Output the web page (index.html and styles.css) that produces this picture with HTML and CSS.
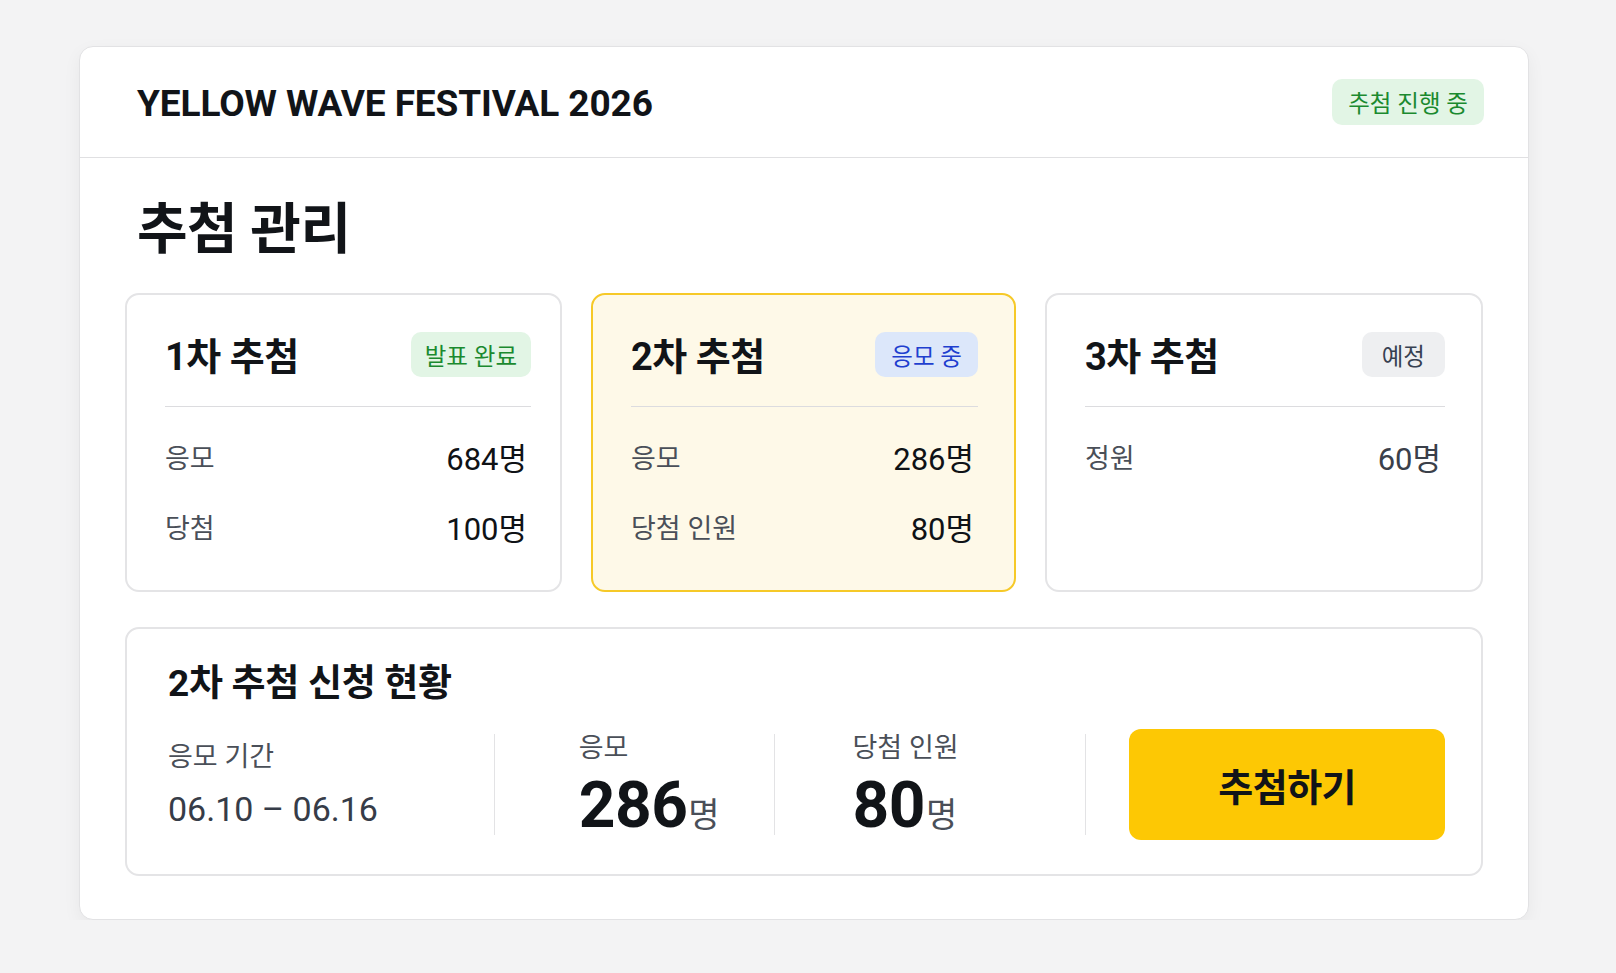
FILE: index.html
```html
<!DOCTYPE html>
<html lang="ko">
<head>
<meta charset="utf-8">
<title>추첨 관리</title>
<link rel="stylesheet" href="styles.css">
</head>
<body>
<main class="card">
  <header class="top">
    <div class="brand">YELLOW WAVE FESTIVAL 2026</div>
    <span class="badge badge-green badge-lg">추첨 진행 중</span>
  </header>
  <section class="content">
    <h1 class="page-title">추첨 관리</h1>
    <div class="rounds">
      <article class="round round-first">
        <div class="round-head">
          <h2 class="round-title">1차 추첨</h2>
          <span class="badge badge-green">발표 완료</span>
        </div>
        <div class="round-rows">
          <div class="row"><span class="label">응모</span><span class="value">684명</span></div>
          <div class="row"><span class="label">당첨</span><span class="value">100명</span></div>
        </div>
      </article>
      <article class="round round-active">
        <div class="round-head">
          <h2 class="round-title">2차 추첨</h2>
          <span class="badge badge-blue">응모 중</span>
        </div>
        <div class="round-rows">
          <div class="row"><span class="label">응모</span><span class="value">286명</span></div>
          <div class="row"><span class="label">당첨 인원</span><span class="value">80명</span></div>
        </div>
      </article>
      <article class="round">
        <div class="round-head">
          <h2 class="round-title">3차 추첨</h2>
          <span class="badge badge-gray">예정</span>
        </div>
        <div class="round-rows">
          <div class="row"><span class="label">정원</span><span class="value value-muted">60명</span></div>
        </div>
      </article>
    </div>
    <section class="status">
      <h2 class="status-title">2차 추첨 신청 현황</h2>
      <div class="status-row">
        <div class="stat stat-period">
          <span class="stat-label">응모 기간</span>
          <span class="stat-date">06.10 – 06.16</span>
        </div>
        <div class="stat stat-count">
          <span class="stat-label">응모</span>
          <span class="stat-num"><b>286</b><small>명</small></span>
        </div>
        <div class="stat stat-win">
          <span class="stat-label">당첨 인원</span>
          <span class="stat-num"><b>80</b><small>명</small></span>
        </div>
        <button class="draw-btn" type="button">추첨하기</button>
      </div>
    </section>
  </section>
</main>
</body>
</html>
```
FILE: styles.css
```css
* { box-sizing: border-box; }
html, body { margin: 0; padding: 0; }
body {
  background: #f3f3f4;
  font-family: "Roboto", "Noto Sans CJK KR", sans-serif;
  color: #111418;
  padding-top: 46px;
}
.card {
  width: 1450px;
  margin: 0 0 0 79px;
  background: #ffffff;
  border: 1px solid #e2e2e4;
  border-radius: 14px;
  box-shadow: 0 6px 18px rgba(0, 0, 0, 0.05);
}
.top {
  height: 111px;
  display: flex;
  align-items: center;
  justify-content: space-between;
  padding: 2px 44px 0 57px;
  border-bottom: 1.5px solid #e0e0e2;
}
.brand {
  font-size: 37px;
  font-weight: 700;
  letter-spacing: -0.1px;
  color: #111418;
}
.badge {
  display: inline-flex;
  align-items: center;
  justify-content: center;
  height: 45px;
  padding: 0 14px;
  border-radius: 10px;
  font-size: 23.5px;
  font-weight: 400;
  white-space: nowrap;
}
.badge-lg { height: 46px; padding: 0 16px; margin-top: -2px; }
.badge-green { background: #e2f5e5; color: #1b8a2f; }
.badge-blue { background: #dce7fa; color: #1f3fcf; padding: 0 16px; }
.badge-gray { background: #eeeff1; color: #374151; padding: 0 20px; }

.content { padding: 0 45px 43px; }
.page-title {
  margin: 41px 0 0 12px;
  font-size: 55px;
  line-height: 60px;
  font-weight: 700;
  color: #111418;
  letter-spacing: -0.5px;
}
.rounds {
  margin-top: 34px;
  display: grid;
  grid-template-columns: 437px 425px 438px;
  gap: 29px;
}
.round {
  height: 299px;
  border: 2px solid #e4e4e6;
  border-radius: 14px;
  padding: 37px 36px 0 38px;
  background: #ffffff;
}
.round-first { padding-right: 29px; }
.round-active {
  background: #fef9e8;
  border-color: #f6c928;
}
.round-head {
  display: flex;
  align-items: center;
  justify-content: space-between;
  height: 45px;
}
.round-title {
  margin: -3px 0 0;
  font-size: 38px;
  font-weight: 700;
  letter-spacing: -0.5px;
  color: #111418;
}
.round-rows {
  margin-top: 29px;
  border-top: 1.5px solid #dcdcdf;
  padding-top: 14px;
}
.row {
  height: 70px;
  display: flex;
  align-items: center;
  justify-content: space-between;
  padding-right: 4px;
}
.label { font-size: 27px; color: #4a4f58; }
.value { font-size: 31px; font-weight: 400; color: #0f1216; }
.value-muted { color: #3a404a; }

.status {
  margin-top: 35px;
  border: 2px solid #e4e4e6;
  border-radius: 14px;
  padding: 35px 36px 34px 41px;
}
.status-title {
  margin: 0;
  font-size: 37px;
  line-height: 40px;
  font-weight: 700;
  color: #111418;
  letter-spacing: -0.3px;
}
.status-row {
  margin-top: 25px;
  height: 111px;
  display: flex;
  align-items: center;
}
.stat {
  height: 101px;
  display: flex;
  flex-direction: column;
}
.stat-period {
  width: 327px;
  justify-content: center;
  gap: 16px;
  border-right: 1.5px solid #e3e3e5;
}
.stat-count { width: 280px; padding-left: 84px; border-right: 1.5px solid #e3e3e5; }
.stat-win { width: 312px; padding-left: 78px; border-right: 1.5px solid #e3e3e5; }
.stat-label { font-size: 27px; line-height: 32px; color: #4a4f58; }
.stat-count .stat-label,
.stat-win .stat-label { line-height: 28px; }
.stat-date { font-size: 34px; line-height: 40px; color: #363c48; }
.stat-num { display: flex; align-items: baseline; line-height: 64px; margin-top: 12px; }
.stat-num b { font-size: 64px; font-weight: 700; color: #111418; letter-spacing: -0.5px; }
.stat-num small { font-size: 34px; color: #4a4f58; margin-left: 1px; }
.draw-btn {
  margin-left: 43px;
  width: 316px;
  height: 111px;
  border: none;
  border-radius: 12px;
  background: #fdc804;
  font-family: "Roboto", "Noto Sans CJK KR", sans-serif;
  font-size: 38px;
  font-weight: 700;
  color: #111418;
  letter-spacing: -0.5px;
  cursor: pointer;
}
```
